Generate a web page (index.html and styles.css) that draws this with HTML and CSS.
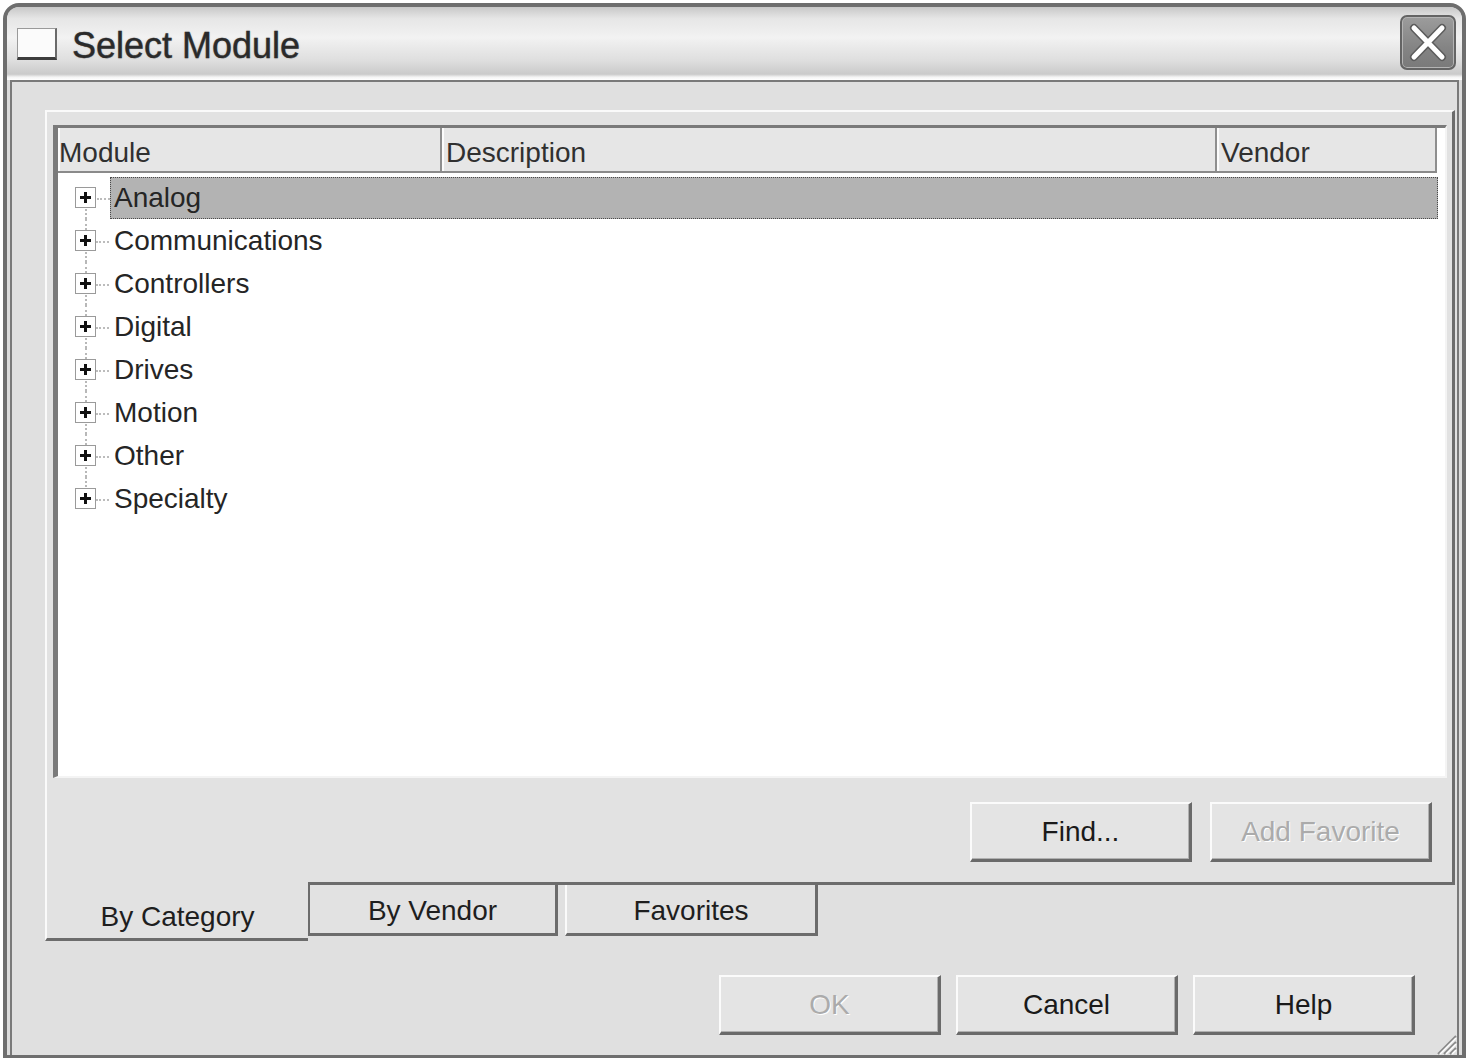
FILE: index.html
```html
<!DOCTYPE html>
<html lang="en">
<head>
  <meta charset="UTF-8" />
  <title>Select Module</title>
  <link rel="stylesheet" href="styles.css">
</head>
<body>
  <div class="window">
    <div class="titlebar">
      <span class="app-icon"></span>
      <span class="title">Select Module</span>
      <button class="close" aria-label="Close">
        <svg width="52" height="51" viewBox="0 0 52 51">
          <path d="M12 11 L40 40 M40 11 L12 40" stroke="#5c5c5c" stroke-width="8" stroke-linecap="round"/>
          <path d="M12 11 L40 40 M40 11 L12 40" stroke="#ffffff" stroke-width="5" stroke-linecap="round"/>
        </svg>
      </button>
    </div>

    <div class="client">
      <div class="pane">
        <div class="listview">
          <div class="header">
            <div class="col col-module">Module</div>
            <div class="col col-desc">Description</div>
            <div class="col col-vendor">Vendor</div>
          </div>
          <ul class="tree">
            <li class="node first selected"><span class="expander"></span><span class="label">Analog</span></li>
            <li class="node"><span class="expander"></span><span class="label">Communications</span></li>
            <li class="node"><span class="expander"></span><span class="label">Controllers</span></li>
            <li class="node"><span class="expander"></span><span class="label">Digital</span></li>
            <li class="node"><span class="expander"></span><span class="label">Drives</span></li>
            <li class="node"><span class="expander"></span><span class="label">Motion</span></li>
            <li class="node"><span class="expander"></span><span class="label">Other</span></li>
            <li class="node last"><span class="expander"></span><span class="label">Specialty</span></li>
          </ul>
        </div>
        <div class="pane-actions">
          <button class="btn">Find...</button>
          <button class="btn" disabled>Add Favorite</button>
        </div>
      </div>

      <div class="tabs">
        <div class="tab active">By Category</div>
        <div class="tab tab-vendor">By Vendor</div>
        <div class="tab tab-fav">Favorites</div>
      </div>

      <div class="dialog-actions">
        <button class="btn" disabled>OK</button>
        <button class="btn">Cancel</button>
        <button class="btn">Help</button>
      </div>

      <svg class="grip" width="24" height="24" viewBox="0 0 24 24">
        <path d="M23 5 L5 23 M23 11 L11 23 M23 17 L17 23" stroke="#8a8a8a" stroke-width="2"/>
        <path d="M23 7 L7 23 M23 13 L13 23 M23 19 L19 23" stroke="#ffffff" stroke-width="1.5"/>
      </svg>
    </div>
  </div>
</body>
</html>
```

FILE: styles.css
```css
* {
  margin: 0; padding: 0;
  box-sizing: border-box;
  font-family: 'Liberation Sans', Arial, sans-serif;
}

body {
  background: #ffffff;
  color: #1e1e1e;
  font-size: 28px;
}

.window {
  margin: 3px 0 0 3px;
  width: 1463px;
  height: 1055px;
  border: 4px solid #6e6e6e;
  border-bottom-width: 3px;
  border-radius: 16px 16px 0 0;
  background: #dcdcdc;
  display: flex;
  flex-direction: column;
  overflow: hidden;
}

/* title bar */
.titlebar {
  height: 73px;
  flex: none;
  display: flex;
  align-items: center;
  padding: 0 6px 0 10px;
  background: linear-gradient(#c8c8c8 0%, #e6e6e6 16%, #f2f2f2 42%, #dedede 74%, #cacaca 92%, #f4f4f4 96%, #ffffff 100%);
}

.app-icon {
  width: 40px;
  height: 32px;
  background: #fbfbfb;
  border: 1px solid #9a9a9a;
  border-bottom: 3px solid #3c3c3c;
  border-right: 2px solid #6a6a6a;
}

.title {
  margin-left: 15px;
  margin-top: 4px;
  font-size: 36px;
  color: #2a2a2a;
  -webkit-text-stroke: 0.4px #2a2a2a;
  text-shadow: 0 0 2px rgba(0,0,0,0.25);
  flex: 1;
}

.close {
  width: 56px;
  height: 55px;
  border: 2px solid #646464;
  border-radius: 7px;
  background: linear-gradient(#9c9c9c, #848484 60%, #7a7a7a);
  box-shadow: inset 0 0 0 1px #b4b4b4;
  display: flex;
  align-items: center;
  justify-content: center;
  margin-bottom: 2px;
}

/* client area */
.client {
  flex: 1;
  position: relative;
  margin: 0 3px;
  border: 2px solid #7a7a7a;
  border-bottom: none;
  background: #e0e0e0;
  padding: 28px 2px 0 33px;
  display: flex;
  flex-direction: column;
}

.pane {
  height: 775px;
  flex: none;
  background: #e2e2e2;
  border-top: 2px solid #fafafa;
  border-left: 2px solid #fafafa;
  border-right: 3px solid #6c6c6c;
  border-bottom: 3px solid #6c6c6c;
  padding: 13px 5px 0 6px;
  display: flex;
  flex-direction: column;
}

.listview {
  height: 653px;
  background: #ffffff;
  border-left: 5px solid #7a7a7a;
  border-top: 3px solid #7a7a7a;
  border-right: 2px solid #f4f4f4;
  border-bottom: 2px solid #f4f4f4;
}

.header {
  display: flex;
  height: 45px;
  background: #e6e6e6;
  border-bottom: 2px solid #8a8a8a;
  margin-right: 8px;
}

.col {
  display: flex;
  align-items: center;
  padding-left: 1px;
  padding-top: 6px;
  color: #303030;
  border-right: 2px solid #8e8e8e;
  box-shadow: inset 2px 0 0 #fbfbfb;
}

.col-module { width: 384px; }
.col-desc { width: 775px; padding-left: 4px; }
.col-vendor { width: 220px; padding-left: 4px; }

.tree {
  list-style: none;
  padding-top: 3px;
}

.node {
  position: relative;
  height: 43px;
  display: flex;
  align-items: center;
  padding-left: 17px;
}

.node::before {
  content: "";
  position: absolute;
  left: 27px;
  top: 0;
  bottom: 0;
  border-left: 2px dotted #b8b8b8;
}

.node.first::before { top: 50%; }
.node.last::before { bottom: 50%; }

.expander {
  position: relative;
  z-index: 1;
  width: 21px;
  height: 21px;
  border: 1px solid #9a9a9a;
  background: #fff;
  flex: none;
}

.expander::before,
.expander::after {
  content: "";
  position: absolute;
  background: #111;
}

.expander::before { left: 4px; right: 4px; top: 8px; height: 3px; }
.expander::after { top: 4px; bottom: 4px; left: 8px; width: 3px; }

.label {
  margin-left: 14px;
  margin-right: 7px;
  position: relative;
  flex: 1;
  height: 42px;
  display: flex;
  align-items: center;
  padding-left: 4px;
  color: #252525;
}

.label::before {
  content: "";
  position: absolute;
  left: -14px;
  width: 13px;
  top: 50%;
  border-top: 2px dotted #bcbcbc;
}

.selected .label {
  background: #b3b3b3;
  border: 1px dotted #4a4a4a;
  padding-left: 3px;
}

/* buttons */
.btn {
  width: 222px;
  height: 60px;
  font-size: 28px;
  color: #1a1a1a;
  background: #e4e4e4;
  border-top: 2px solid #fbfbfb;
  border-left: 2px solid #fbfbfb;
  border-right: 3px solid #6a6a6a;
  border-bottom: 3px solid #6a6a6a;
  box-shadow: inset -1px -1px 0 #b0b0b0;
}

.btn:disabled {
  color: #ababab;
  text-shadow: 1px 1px 0 #ffffff;
}

.pane-actions {
  display: flex;
  justify-content: flex-end;
  gap: 18px;
  margin-top: 24px;
  padding-right: 15px;
}

/* tabs */
.tabs {
  display: flex;
  align-items: flex-start;
  height: 56px;
  flex: none;
}

.tab {
  height: 51px;
  display: flex;
  align-items: center;
  justify-content: center;
  background: #e2e2e2;
  border-right: 3px solid #6c6c6c;
  border-bottom: 3px solid #6c6c6c;
  color: #1e1e1e;
}

.tab.active {
  width: 263px;
  height: 59px;
  margin-top: -3px;
  padding-top: 14px;
  border-left: 2px solid #fafafa;
  border-right: none;
}

.tab-vendor {
  width: 250px;
  border-left: 2px solid #6c6c6c;
  padding-top: 4px;
}

.tab-fav {
  width: 253px;
  margin-left: 7px;
  border-left: 2px solid #fafafa;
  padding-top: 4px;
}

.dialog-actions {
  display: flex;
  justify-content: flex-end;
  gap: 15px;
  margin-top: 34px;
  padding-right: 40px;
}

.grip {
  position: absolute;
  right: 0;
  bottom: 0;
}
```
